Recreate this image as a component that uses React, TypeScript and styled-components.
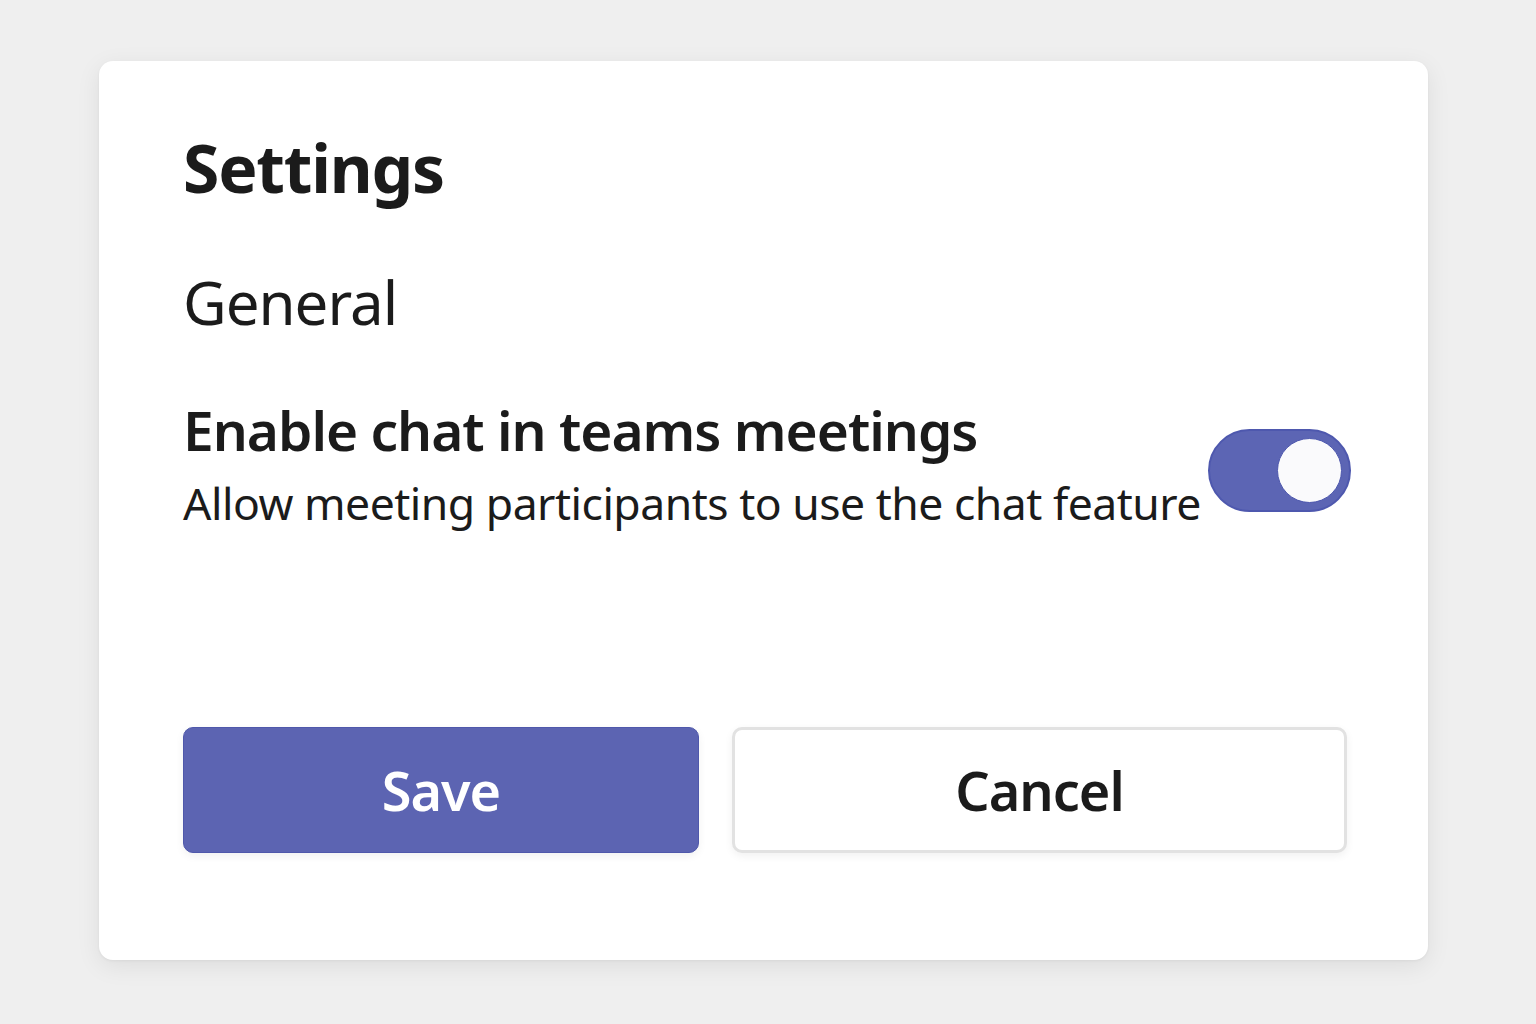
import React, { useState } from "react";
import styled, { createGlobalStyle } from "styled-components";

const Global = createGlobalStyle`
  html, body { margin: 0; padding: 0; }
  body {
    background: #efefef;
    font-family: "Noto Sans", "Open Sans", sans-serif;
    color: #1b1b1b;
    width: 1536px;
    height: 1024px;
    overflow: hidden;
  }
`;

const Page = styled.div`
  padding: 61px 0 0 99px;
`;

const Card = styled.div`
  box-sizing: border-box;
  width: 1329px;
  height: 899px;
  background: #ffffff;
  border-radius: 14px;
  box-shadow: 0 6px 24px rgba(0, 0, 0, 0.08), 0 1px 3px rgba(0, 0, 0, 0.05);
  padding: 0 77px 0 84px;
  display: flex;
  flex-direction: column;
`;

const Title = styled.h1`
  margin: 73px 0 0;
  font-size: 66px;
  line-height: 66px;
  font-weight: 700;
  letter-spacing: -1.2px;
`;

const Section = styled.h2`
  margin: 72px 0 0;
  font-size: 60px;
  line-height: 60px;
  font-weight: 400;
  letter-spacing: -1px;
`;

const SettingRow = styled.div`
  margin-top: 65px;
  display: flex;
  align-items: center;
  justify-content: space-between;
`;

const Texts = styled.div`
  display: flex;
  flex-direction: column;
  white-space: nowrap;
`;

const Label = styled.div`
  font-size: 55px;
  line-height: 66px;
  font-weight: 600;
  letter-spacing: -1px;
`;

const Desc = styled.div`
  margin-top: 7px;
  font-size: 44.5px;
  line-height: 66px;
  font-weight: 400;
  letter-spacing: -0.5px;
`;

const Switch = styled.button<{ $on: boolean }>`
  box-sizing: border-box;
  width: 143px;
  height: 83px;
  margin-top: 8px;
  border-radius: 42px;
  border: 2px solid #4e58ae;
  background: ${(p) => (p.$on ? "#5c65b4" : "#c8c8c8")};
  padding: 0 7px;
  display: flex;
  align-items: center;
  justify-content: ${(p) => (p.$on ? "flex-end" : "flex-start")};
  cursor: pointer;
  flex-shrink: 0;
`;

const Knob = styled.span`
  box-sizing: border-box;
  width: 65px;
  height: 65px;
  border-radius: 50%;
  background: #fafafc;
  border: 1.5px solid #4e58ae;
`;

const Actions = styled.div`
  margin-top: auto;
  margin-bottom: 107px;
  display: flex;
  gap: 33px;
`;

const Btn = styled.button<{ $primary?: boolean; $w: number }>`
  box-sizing: border-box;
  width: ${(p) => p.$w}px;
  height: 126px;
  border-radius: 10px;
  font-family: "Noto Sans", "Open Sans", sans-serif;
  font-size: 54px;
  font-weight: 600;
  letter-spacing: -1px;
  cursor: pointer;
  border: ${(p) => (p.$primary ? "1px solid #4f58ab" : "3px solid #e2e2e2")};
  background: ${(p) => (p.$primary ? "#5c64b2" : "#ffffff")};
  color: ${(p) => (p.$primary ? "#ffffff" : "#1b1b1b")};
  box-shadow: 0 3px 8px rgba(0, 0, 0, 0.06);
`;

export default function App() {
  const [on, setOn] = useState(true);
  return (
    <>
      <Global />
      <Page>
        <Card>
          <Title>Settings</Title>
          <Section>General</Section>
          <SettingRow>
            <Texts>
              <Label>Enable chat in teams meetings</Label>
              <Desc>Allow meeting participants to use the chat feature</Desc>
            </Texts>
            <Switch $on={on} onClick={() => setOn(!on)} aria-label="Enable chat">
              <Knob />
            </Switch>
          </SettingRow>
          <Actions>
            <Btn $primary $w={516}>Save</Btn>
            <Btn $w={615}>Cancel</Btn>
          </Actions>
        </Card>
      </Page>
    </>
  );
}
